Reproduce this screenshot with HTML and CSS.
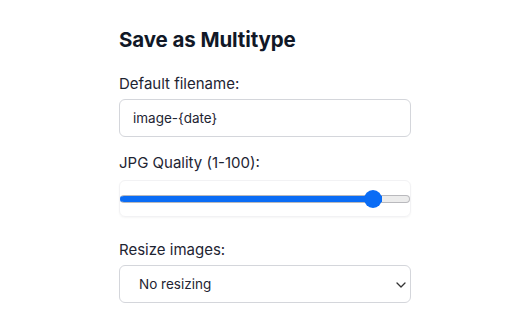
FILE: index.html
```html
<!DOCTYPE html>
<html>
<head>
<meta charset="utf-8">
<link rel="stylesheet" href="styles.css">
</head>
<body>
<main class="panel">
  <h1 class="title">Save as Multitype</h1>
  <label class="label" for="fn">Default filename:</label>
  <input id="fn" class="field" type="text" value="image-{date}">
  <label class="label label-gap" for="q">JPG Quality (1-100):</label>
  <div class="range-box">
    <input id="q" class="range" type="range" min="1" max="100" value="90" style="--pct: 90.5%">
  </div>
  <label class="label label-gap2" for="rs">Resize images:</label>
  <div class="select-wrap">
    <select id="rs" class="field select">
      <option>No resizing</option>
    </select>
    <svg class="chev" width="10" height="6" viewBox="0 0 10 6"><path d="M1 1l4 4 4-4" fill="none" stroke="#333" stroke-width="1.3" stroke-linecap="round" stroke-linejoin="round"/></svg>
  </div>
</main>
</body>
</html>
```
FILE: styles.css
```css
html, body {
  margin: 0;
  padding: 0;
  background: #ffffff;
}
body {
  font-family: Inter, "Noto Sans", sans-serif;
  color: #1e2432;
}
.panel {
  width: 292px;
  margin-left: 119px;
  padding-top: 27px;
  display: flex;
  flex-direction: column;
}
.title {
  margin: 0 0 21px 0;
  font-size: 20.5px;
  line-height: 26px;
  font-weight: 700;
  color: #111827;
  letter-spacing: -0.1px;
}
.label {
  display: block;
  font-size: 15px;
  line-height: 20px;
  color: #1e2432;
  margin-bottom: 5px;
}
.label-gap { margin-top: 16px; }
.label-gap2 { margin-top: 23px; }
.field {
  box-sizing: border-box;
  width: 292px;
  height: 38px;
  border: 1px solid #d4d6db;
  border-radius: 6px;
  padding: 0 13px;
  font-family: Inter, "Noto Sans", sans-serif;
  font-size: 13.5px;
  color: #1e2432;
  background: #fff;
  outline: none;
}
.range-box {
  box-sizing: border-box;
  height: 37px;
  margin-top: 2px;
  border: 1px solid #f2f2f4;
  border-radius: 6px;
  box-shadow: 0 1px 2px rgba(0,0,0,0.04);
  display: flex;
  align-items: center;
}
.range {
  -webkit-appearance: none;
  appearance: none;
  width: 292px;
  margin: 0;
  height: 18px;
  background: transparent;
}
.range::-webkit-slider-runnable-track {
  height: 8px;
  border-radius: 4px;
  box-sizing: border-box;
  background: linear-gradient(to right, #0a6cf5 0, #0a6cf5 var(--pct), #ececec var(--pct), #ececec 100%);
  border: 1px solid #b9b9bd;
  border-left-color: #0a6cf5;
}
.range::-webkit-slider-thumb {
  -webkit-appearance: none;
  width: 18px;
  height: 18px;
  border-radius: 50%;
  background: #0a6cf5;
  margin-top: -6px;
  border: none;
}
.select-wrap {
  position: relative;
}
.select {
  -webkit-appearance: none;
  appearance: none;
  padding: 0 19px;
}
.chev {
  position: absolute;
  right: 5px;
  top: 17px;
  pointer-events: none;
}
```
